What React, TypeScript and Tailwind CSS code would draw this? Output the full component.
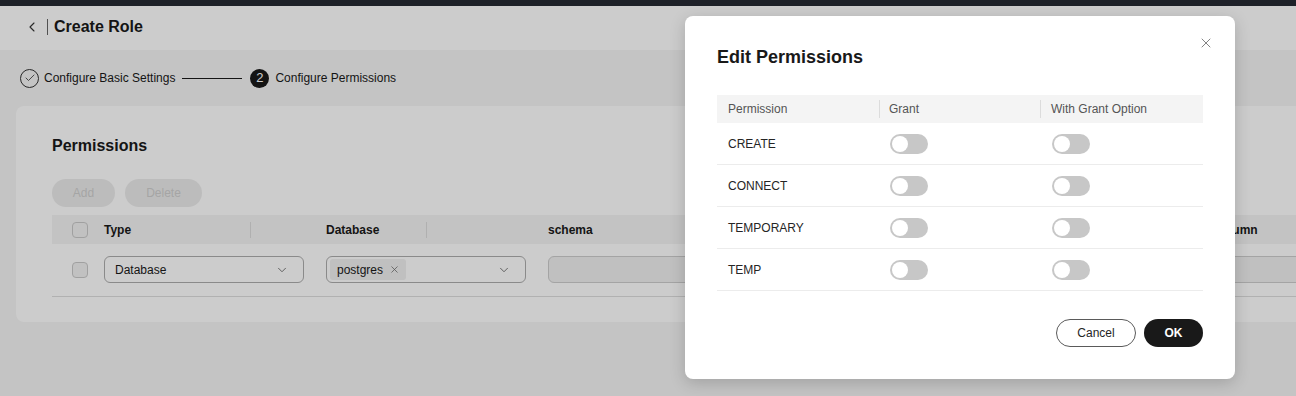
import { ChevronLeft, ChevronDown, Check, X } from "lucide-react";

const font = { fontFamily: '"Liberation Sans", Arial, sans-serif' };

const perms = ["CREATE", "CONNECT", "TEMPORARY", "TEMP"];

const Toggle = () => (
  <span className="flex h-5 w-[38px] items-center rounded-full bg-[#c7c7c7] px-[2px]">
    <span className="h-4 w-4 rounded-full bg-white" />
  </span>
);

const Checkbox = () => (
  <span className="block h-4 w-4 rounded-[4px] border border-[#c9c9c9] bg-[#f2f2f2]" />
);

export default function App() {
  return (
    <div className="relative h-[396px] w-[1296px] overflow-hidden bg-[#f5f5f5] text-[#191919]" style={font}>
      <div className="h-[6px] bg-[#262a33]" />
      <header className="flex h-[44px] items-center bg-white pb-[2px] pl-[24px]">
        <ChevronLeft className="h-4 w-4 text-[#333]" strokeWidth={1.6} />
        <span className="ml-[7px] h-4 w-px bg-[#666]" />
        <h1 className="ml-[6px] text-[16px] font-bold">Create Role</h1>
      </header>

      <div className="flex h-[56px] items-center pl-5 text-[12px]">
        <span className="flex h-[19px] w-[19px] items-center justify-center rounded-full border border-[#333]">
          <Check className="h-3 w-3 text-[#333]" strokeWidth={1.6} />
        </span>
        <span className="ml-[5px]">Configure Basic Settings</span>
        <span className="ml-[7px] h-px w-[60px] bg-[#191919]" />
        <span className="ml-2 flex h-[19px] w-[19px] items-center justify-center rounded-full bg-[#191919] text-[13px] text-white">
          2
        </span>
        <span className="ml-[6px]">Configure Permissions</span>
      </div>

      <section className="ml-4 mr-[-60px] h-[216px] rounded-lg bg-white pl-9 pt-7">
        <h2 className="text-[16px] font-bold">Permissions</h2>
        <div className="mt-[21px] flex gap-[10px] text-[12px]">
          <button className="h-7 w-[63px] rounded-full bg-[#ececec] text-[#cfcfcf]">Add</button>
          <button className="h-7 w-[77px] rounded-full bg-[#ececec] text-[#cfcfcf]">Delete</button>
        </div>

        <div className="mt-2 flex h-[29px] items-center bg-[#f4f4f4] text-[12px] font-bold">
          <span className="ml-5 mr-4">
            <Checkbox />
          </span>
          <span className="w-[146px]">Type</span>
          <span className="h-4 w-px bg-[#dcdcdc]" />
          <span className="w-[75px]" />
          <span className="w-[100px]">Database</span>
          <span className="h-4 w-px bg-[#dcdcdc]" />
          <span className="w-[121px]" />
          <span className="w-[665px]">schema</span>
          <span>Column</span>
        </div>

        <div className="flex h-[53px] items-center border-b border-[#dedede] pb-px text-[12px]">
          <span className="ml-5 mr-4">
            <Checkbox />
          </span>
          <div className="flex h-[27px] w-[200px] items-center justify-between rounded-[6px] border border-[#adadad] pl-[10px] pr-[14px]">
            <span>Database</span>
            <ChevronDown className="h-[14px] w-[14px] text-[#666]" strokeWidth={1.5} />
          </div>
          <div className="ml-[22px] flex h-[27px] w-[200px] items-center justify-between rounded-[6px] border border-[#adadad] pl-[3px] pr-[14px]">
            <span className="flex h-[21px] items-center gap-[6px] rounded-[3px] bg-[#f0f0f0] pl-[7px] pr-[6px]">
              postgres
              <X className="h-[11px] w-[11px] text-[#666]" strokeWidth={1.6} />
            </span>
            <ChevronDown className="h-[14px] w-[14px] text-[#666]" strokeWidth={1.5} />
          </div>
          <div className="ml-[22px] h-[27px] w-[800px] rounded-[6px] border border-[#cdcdcd] bg-[#f0f0f0]" />
        </div>
      </section>

      <div className="absolute inset-0 bg-black/20" />

      <div className="absolute left-[685px] top-4 h-[363px] w-[550px] rounded-lg bg-white px-8 pt-[27px] shadow-[0_4px_16px_rgba(0,0,0,0.18)]">
        <div className="flex items-start justify-between">
          <h3 className="mt-[1px] text-[18px] font-bold">Edit Permissions</h3>
          <X className="mr-[-11px] mt-[-8px] h-[16px] w-[16px] text-[#7a7a7a]" strokeWidth={1.4} />
        </div>

        <div className="mt-[24px] text-[12px]">
          <div className="grid h-[28px] grid-cols-[162px_161px_163px] items-center bg-[#f4f4f4] text-[#555]">
            <span className="pl-[11px]">Permission</span>
            <span className="border-l border-[#dcdcdc] pl-[9px]">Grant</span>
            <span className="border-l border-[#dcdcdc] pl-[10px]">With Grant Option</span>
          </div>
          {perms.map((p) => (
            <div key={p} className="grid h-[42px] grid-cols-[162px_161px_163px] items-center border-b border-[#ececec] text-[#252525]">
              <span className="pl-[11px]">{p}</span>
              <span className="pl-[11px]">
                <Toggle />
              </span>
              <span className="pl-[12px]">
                <Toggle />
              </span>
            </div>
          ))}
        </div>

        <div className="mt-[28px] flex justify-end gap-2 text-[12px]">
          <button className="h-7 w-[80px] rounded-full border border-[#5a5a5a] text-[#252525]">Cancel</button>
          <button className="h-7 w-[59px] rounded-full bg-[#191919] font-bold text-white">OK</button>
        </div>
      </div>
    </div>
  );
}
